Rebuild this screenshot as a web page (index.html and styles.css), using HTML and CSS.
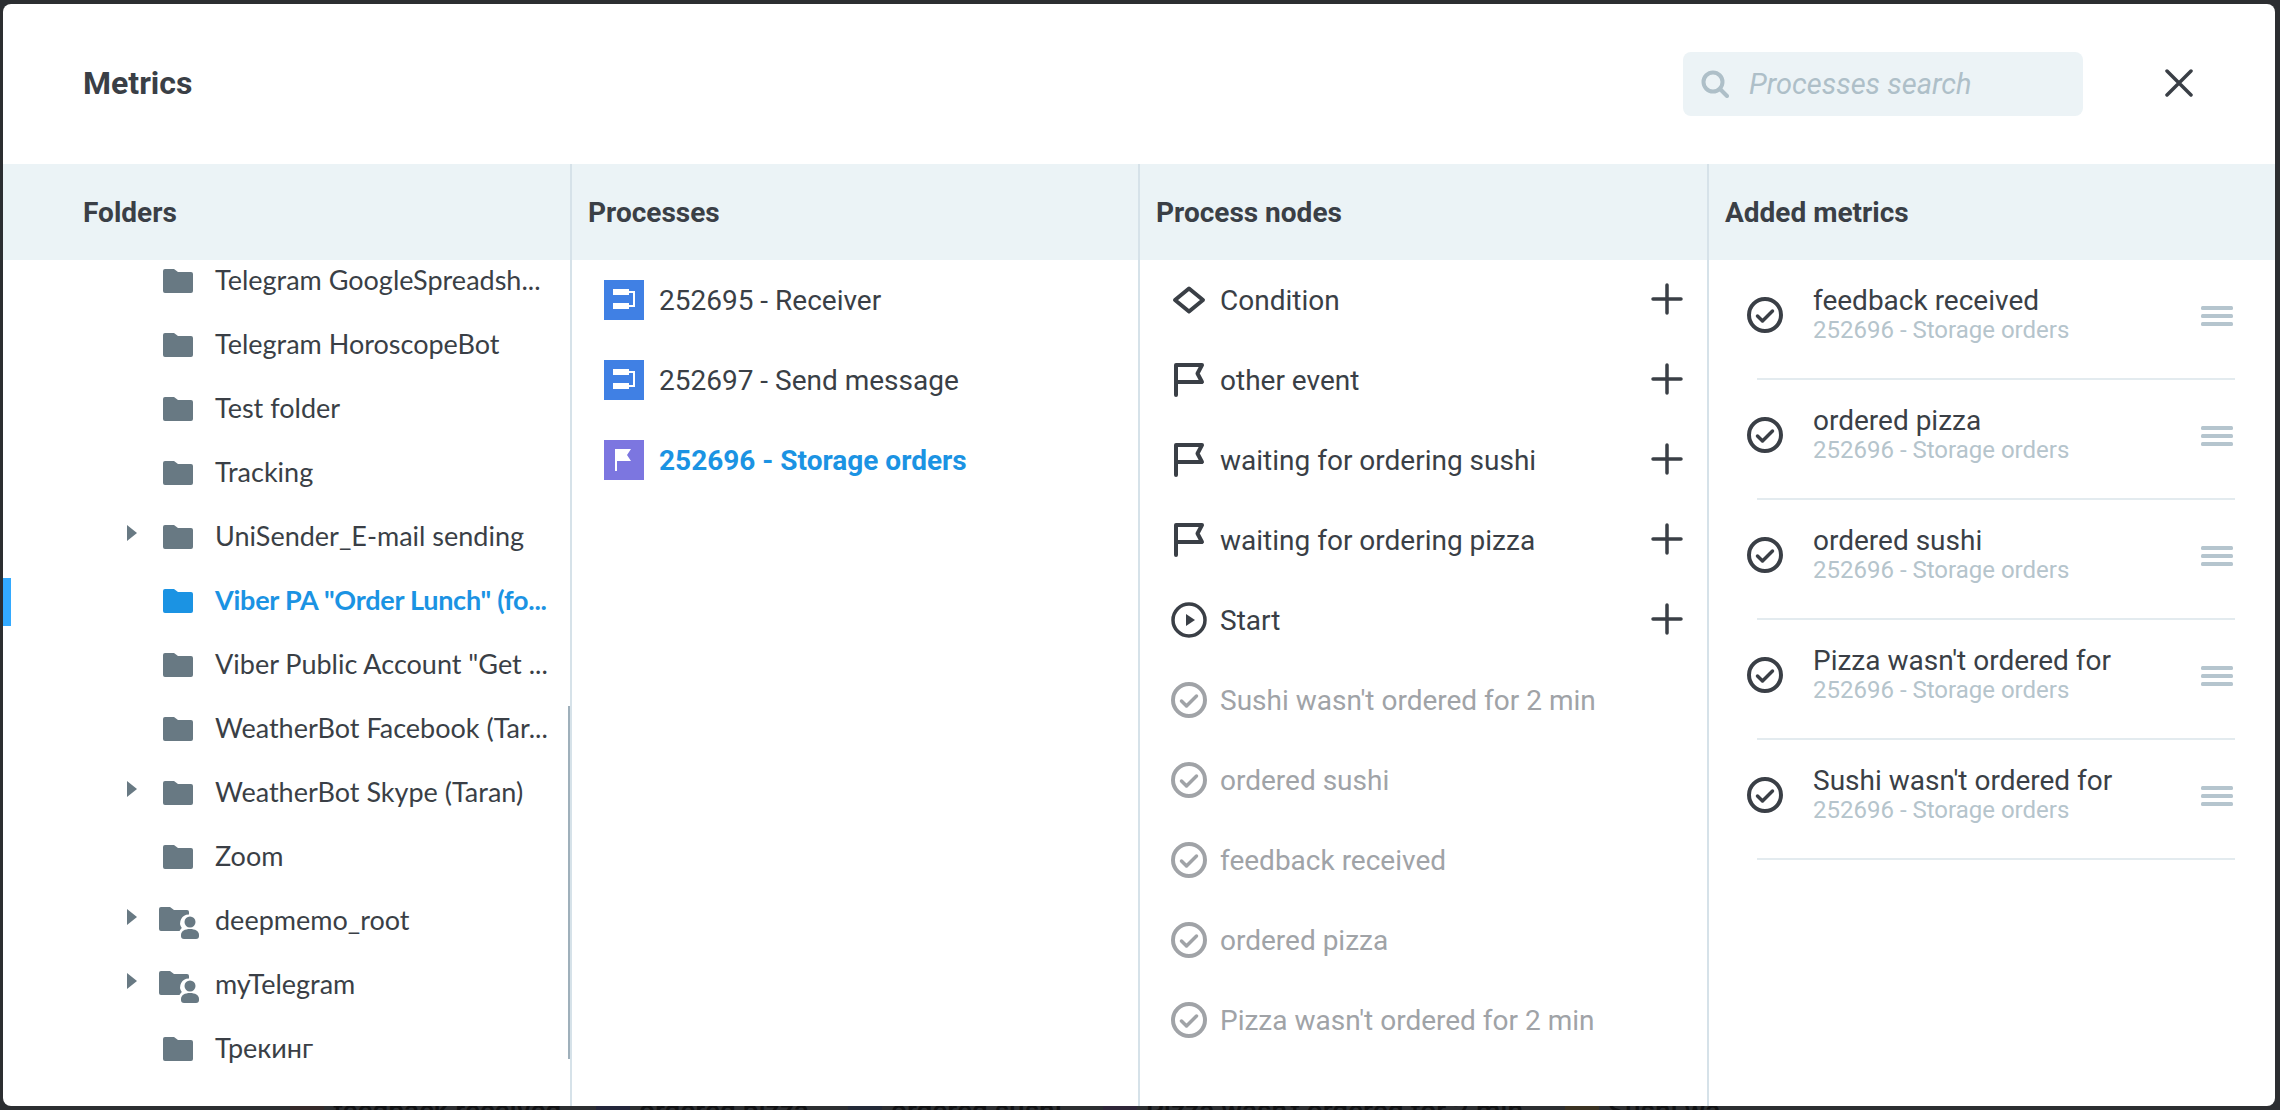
FILE: index.html
```html
<!DOCTYPE html>
<html lang="en">
<head>
    <meta charset="UTF-8">
    <meta name="viewport" content="width=device-width, initial-scale=1.0">
    <title>Metrics</title>
    <link rel="stylesheet" href="styles.css">
</head>
<body>
    <svg class="sprite" aria-hidden="true">
        <symbol id="i-folder" viewBox="0 0 30 24"><path d="M2 0h9l4 3h13a2 2 0 0 1 2 2v17a2 2 0 0 1-2 2H2a2 2 0 0 1-2-2V2a2 2 0 0 1 2-2z"/></symbol>
        <symbol id="i-shared" viewBox="0 0 40 32">
            <path d="M2 0h9l4 3h13a2 2 0 0 1 2 2v2.500a8.500 8.500 0 0 0-7.200 13.500 9 9 0 0 0-2.300 3H2a2 2 0 0 1-2-2V2a2 2 0 0 1 2-2z"/>
            <circle cx="31" cy="15" r="5.500"/>
            <path d="M22 28c0-4 4-6 9-6s9 2 9 6v1a3 3 0 0 1-3 3H25a3 3 0 0 1-3-3z"/>
        </symbol>
        <symbol id="i-process" viewBox="0 0 40 40"><rect x="9" y="9" width="16" height="6" fill="#fff"/><rect x="9" y="23" width="16" height="6" fill="#fff"/><path d="M25 12h5v14h-5" fill="none" stroke="#fff" stroke-width="2"/></symbol>
        <symbol id="i-pflag" viewBox="0 0 40 40"><path d="M11 9h16l-4 6 4 6H13v10h-2z" fill="#fff"/></symbol>
        <symbol id="i-diamond" viewBox="0 0 36 36"><path d="M18 6.500L32 18 18 29.500 4 18z" fill="none" stroke="currentColor" stroke-width="4" stroke-linejoin="round"/></symbol>
        <symbol id="i-flag" viewBox="0 0 36 36"><path d="M5 33V3h26l-4.500 8.500L31 20H5" fill="none" stroke="currentColor" stroke-width="4" stroke-linejoin="round" stroke-linecap="round"/></symbol>
        <symbol id="i-play" viewBox="0 0 36 36"><circle cx="18" cy="18" r="16" fill="none" stroke="currentColor" stroke-width="3.500"/><path d="M15 12l9 6-9 6z" fill="currentColor"/></symbol>
        <symbol id="i-check" viewBox="0 0 36 36"><circle cx="18" cy="18" r="16" fill="none" stroke="currentColor" stroke-width="4"/><path d="M10.500 19l5 5 10-10" fill="none" stroke="currentColor" stroke-width="3.500" stroke-linecap="round" stroke-linejoin="round"/></symbol>
        <symbol id="i-plus" viewBox="0 0 32 32"><path d="M16 2v28M2 16h28" fill="none" stroke="currentColor" stroke-width="3.500" stroke-linecap="round"/></symbol>
        <symbol id="i-drag" viewBox="0 0 32 20"><rect y="0" width="32" height="4" rx="1.500"/><rect y="8" width="32" height="4" rx="1.500"/><rect y="16" width="32" height="4" rx="1.500"/></symbol>
    </svg>

    <!-- what is left of the page under the dialog -->
    <div class="backdrop">
        <span class="back-item back-a">feedback received</span>
        <span class="back-item back-b">ordered pizza</span>
        <span class="back-item back-c">ordered sushi</span>
        <span class="back-item back-d">Pizza wasn't ordered for 2 min</span>
        <span class="back-item back-e">Sushi wa</span>
    </div>

    <div class="modal">
        <div class="modal-head">
            <h1 class="modal-title">Metrics</h1>
            <label class="search">
                <svg class="search-icon" viewBox="0 0 28 28"><circle cx="12" cy="12" r="9.500" fill="none" stroke="currentColor" stroke-width="4"/><path d="M19 19l7 7" fill="none" stroke="currentColor" stroke-width="4" stroke-linecap="round"/></svg>
                <input class="search-input" type="text" placeholder="Processes search">
            </label>
            <svg class="close" viewBox="0 0 28 28"><path d="M2 2l24 24M26 2L2 26" fill="none" stroke="currentColor" stroke-width="3.500" stroke-linecap="round"/></svg>
        </div>

        <div class="columns">
            <section class="col col-folders">
                <h2 class="col-head">Folders</h2>
                <ul class="folder-list">
                    <li class="folder"><span class="arrow-slot"></span><svg class="folder-icon"><use href="#i-folder"/></svg><span class="folder-name">Telegram GoogleSpreadsh...</span></li>
                    <li class="folder"><span class="arrow-slot"></span><svg class="folder-icon"><use href="#i-folder"/></svg><span class="folder-name">Telegram HoroscopeBot</span></li>
                    <li class="folder"><span class="arrow-slot"></span><svg class="folder-icon"><use href="#i-folder"/></svg><span class="folder-name">Test folder</span></li>
                    <li class="folder"><span class="arrow-slot"></span><svg class="folder-icon"><use href="#i-folder"/></svg><span class="folder-name">Tracking</span></li>
                    <li class="folder"><span class="arrow-slot"><i class="arrow"></i></span><svg class="folder-icon"><use href="#i-folder"/></svg><span class="folder-name">UniSender_E-mail sending</span></li>
                    <li class="folder active"><span class="arrow-slot"></span><svg class="folder-icon"><use href="#i-folder"/></svg><span class="folder-name">Viber PA "Order Lunch" (fo...</span></li>
                    <li class="folder"><span class="arrow-slot"></span><svg class="folder-icon"><use href="#i-folder"/></svg><span class="folder-name">Viber Public Account "Get ...</span></li>
                    <li class="folder"><span class="arrow-slot"></span><svg class="folder-icon"><use href="#i-folder"/></svg><span class="folder-name">WeatherBot Facebook (Tar...</span></li>
                    <li class="folder"><span class="arrow-slot"><i class="arrow"></i></span><svg class="folder-icon"><use href="#i-folder"/></svg><span class="folder-name">WeatherBot Skype (Taran)</span></li>
                    <li class="folder"><span class="arrow-slot"></span><svg class="folder-icon"><use href="#i-folder"/></svg><span class="folder-name">Zoom</span></li>
                    <li class="folder"><span class="arrow-slot"><i class="arrow"></i></span><svg class="folder-icon shared"><use href="#i-shared"/></svg><span class="folder-name">deepmemo_root</span></li>
                    <li class="folder"><span class="arrow-slot"><i class="arrow"></i></span><svg class="folder-icon shared"><use href="#i-shared"/></svg><span class="folder-name">myTelegram</span></li>
                    <li class="folder"><span class="arrow-slot"></span><svg class="folder-icon"><use href="#i-folder"/></svg><span class="folder-name">Трекинг</span></li>
                </ul>
                <div class="scrollbar"></div>
            </section>

            <section class="col">
                <h2 class="col-head">Processes</h2>
                <ul class="list">
                    <li class="process"><svg class="process-icon conv"><use href="#i-process"/></svg>252695 - Receiver</li>
                    <li class="process"><svg class="process-icon conv"><use href="#i-process"/></svg>252697 - Send message</li>
                    <li class="process selected"><svg class="process-icon state"><use href="#i-pflag"/></svg>252696 - Storage orders</li>
                </ul>
            </section>

            <section class="col">
                <h2 class="col-head">Process nodes</h2>
                <ul class="list">
                    <li class="node"><svg class="node-icon"><use href="#i-diamond"/></svg><span class="node-name">Condition</span><svg class="plus"><use href="#i-plus"/></svg></li>
                    <li class="node"><svg class="node-icon"><use href="#i-flag"/></svg><span class="node-name">other event</span><svg class="plus"><use href="#i-plus"/></svg></li>
                    <li class="node"><svg class="node-icon"><use href="#i-flag"/></svg><span class="node-name">waiting for ordering sushi</span><svg class="plus"><use href="#i-plus"/></svg></li>
                    <li class="node"><svg class="node-icon"><use href="#i-flag"/></svg><span class="node-name">waiting for ordering pizza</span><svg class="plus"><use href="#i-plus"/></svg></li>
                    <li class="node"><svg class="node-icon"><use href="#i-play"/></svg><span class="node-name">Start</span><svg class="plus"><use href="#i-plus"/></svg></li>
                    <li class="node added"><svg class="node-icon"><use href="#i-check"/></svg><span class="node-name">Sushi wasn't ordered for 2 min</span></li>
                    <li class="node added"><svg class="node-icon"><use href="#i-check"/></svg><span class="node-name">ordered sushi</span></li>
                    <li class="node added"><svg class="node-icon"><use href="#i-check"/></svg><span class="node-name">feedback received</span></li>
                    <li class="node added"><svg class="node-icon"><use href="#i-check"/></svg><span class="node-name">ordered pizza</span></li>
                    <li class="node added"><svg class="node-icon"><use href="#i-check"/></svg><span class="node-name">Pizza wasn't ordered for 2 min</span></li>
                </ul>
            </section>

            <section class="col">
                <h2 class="col-head">Added metrics</h2>
                <ul class="list">
                    <li class="metric"><svg class="metric-icon"><use href="#i-check"/></svg><div class="metric-text"><div class="metric-name">feedback received</div><div class="metric-sub">252696 - Storage orders</div></div><svg class="drag"><use href="#i-drag"/></svg></li>
                    <li class="metric"><svg class="metric-icon"><use href="#i-check"/></svg><div class="metric-text"><div class="metric-name">ordered pizza</div><div class="metric-sub">252696 - Storage orders</div></div><svg class="drag"><use href="#i-drag"/></svg></li>
                    <li class="metric"><svg class="metric-icon"><use href="#i-check"/></svg><div class="metric-text"><div class="metric-name">ordered sushi</div><div class="metric-sub">252696 - Storage orders</div></div><svg class="drag"><use href="#i-drag"/></svg></li>
                    <li class="metric"><svg class="metric-icon"><use href="#i-check"/></svg><div class="metric-text"><div class="metric-name">Pizza wasn't ordered for</div><div class="metric-sub">252696 - Storage orders</div></div><svg class="drag"><use href="#i-drag"/></svg></li>
                    <li class="metric"><svg class="metric-icon"><use href="#i-check"/></svg><div class="metric-text"><div class="metric-name">Sushi wasn't ordered for</div><div class="metric-sub">252696 - Storage orders</div></div><svg class="drag"><use href="#i-drag"/></svg></li>
                </ul>
            </section>
        </div>
    </div>
</body>
</html>
```

FILE: styles.css
```css
* {
    box-sizing: border-box;
}
html, body {
    height: 100%;
}
body {
    margin: 0;
    padding: 4px 5px 4px 3px;
    overflow: hidden;
    position: relative;
    background-color: #2c2e31;
    font-family: Roboto, Arial, sans-serif;
    color: #3a3f46;
}
ul {
    list-style: none;
    margin: 0;
    padding: 0;
}
.sprite {
    display: none;
}

/* page behind the dialog, only its top edge shows */
.backdrop {
    position: absolute;
    left: 0;
    right: 0;
    top: 1097px;
    font-size: 28px;
    line-height: 28px;
    font-weight: 500;
    color: #101113;
}
.back-item {
    position: absolute;
    top: 0;
    white-space: nowrap;
}
.back-item::before {
    content: "";
    position: absolute;
    left: -43px;
    top: 0;
    width: 34px;
    height: 20px;
}
.back-a { left: 333px; }
.back-b { left: 639px; }
.back-c { left: 891px; }
.back-d { left: 1146px; }
.back-e { left: 1608px; }
.back-a::before { background-color: #352a2a; }
.back-b::before { background-color: #23263a; }
.back-c::before { background-color: #232a38; }
.back-d::before { background-color: #2e2638; }
.back-e::before { background-color: #3a3222; }

.modal {
    position: relative;
    height: 100%;
    display: flex;
    flex-direction: column;
    background-color: #fff;
    border-radius: 8px;
    overflow: hidden;
}
.modal-head {
    height: 160px;
    flex-shrink: 0;
    display: flex;
    align-items: center;
    padding: 0 82px 0 80px;
}
.modal-title {
    margin: -2px auto 0 0;
    font-size: 32px;
    font-weight: 700;
}
.search {
    width: 400px;
    height: 64px;
    display: flex;
    align-items: center;
    gap: 20px;
    padding-left: 18px;
    background-color: #ecf3f6;
    border-radius: 8px;
    color: #aebfc8;
}
.search-icon {
    width: 28px;
    height: 28px;
    flex-shrink: 0;
}
.search-input {
    flex: 1;
    min-width: 0;
    border: none;
    outline: none;
    padding: 0;
    background: transparent;
    font-family: inherit;
    font-size: 29px;
    font-style: italic;
}
.search-input::placeholder {
    color: #aebfc8;
    opacity: 1;
}
.close {
    width: 28px;
    height: 28px;
    margin-left: 82px;
    margin-top: -2px;
}

.columns {
    flex: 1;
    min-height: 0;
    display: grid;
    grid-template-columns: 567px 568px 569px 1fr;
}
.col {
    position: relative;
    min-width: 0;
    overflow: hidden;
    border-left: 2px solid #d6e2e9;
}
.col-folders {
    border-left: none;
}
.col-head {
    height: 96px;
    margin: 0;
    padding-left: 16px;
    display: flex;
    align-items: center;
    background-color: #ebf3f6;
    font-size: 28px;
    font-weight: 700;
}
.col-folders .col-head {
    padding-left: 80px;
}

.folder-list {
    margin-top: -11px;
}
.folder {
    position: relative;
    height: 64px;
    display: flex;
    align-items: center;
    padding-left: 120px;
    font-family: Lato, "Noto Sans", Arial, sans-serif;
    font-size: 27px;
    white-space: nowrap;
}
.folder-name {
    margin-top: -3px;
}
.arrow-slot {
    width: 40px;
    flex-shrink: 0;
    display: flex;
    padding-left: 4px;
}
.arrow {
    width: 0;
    height: 0;
    margin-top: -8px;
    border-left: 10px solid #687983;
    border-top: 8px solid transparent;
    border-bottom: 8px solid transparent;
}
.folder-icon {
    width: 30px;
    height: 24px;
    flex-shrink: 0;
    margin-right: 22px;
    fill: #687983;
}
.folder-icon.shared {
    width: 40px;
    height: 32px;
    margin: 4px 16px 0 -4px;
}
.folder.active {
    color: #1b93e3;
    font-weight: 700;
    letter-spacing: -0.25px;
}
.folder.active .folder-icon {
    fill: #1b93e3;
}
.folder.active::before {
    content: "";
    position: absolute;
    left: 0;
    top: 9px;
    width: 8px;
    height: 48px;
    background-color: #33aaff;
}
.scrollbar {
    position: absolute;
    right: 0;
    top: 542px;
    width: 2px;
    height: 353px;
    background-color: #9fb0bb;
}

.process {
    height: 80px;
    display: flex;
    align-items: center;
    gap: 15px;
    padding-left: 32px;
    font-size: 28px;
}
.process-icon {
    width: 40px;
    height: 40px;
    flex-shrink: 0;
}
.conv {
    background-color: #4080e4;
}
.state {
    background-color: #7c76e0;
}
.process.selected {
    color: #1b93e3;
    font-weight: 700;
}

.node {
    height: 80px;
    display: flex;
    align-items: center;
    padding: 0 24px 0 31px;
    font-size: 28px;
}
.node-icon {
    width: 36px;
    height: 36px;
    flex-shrink: 0;
    margin-right: 13px;
}
.node-name {
    flex: 1;
}
.plus {
    width: 32px;
    height: 32px;
    margin-top: -2px;
}
.node.added {
    color: #a0a3a7;
}

.metric {
    position: relative;
    height: 120px;
    margin: 0 40px 0 48px;
    padding-bottom: 10px;
    display: flex;
    align-items: center;
    border-bottom: 2px solid #e3ebef;
}
.metric-icon {
    width: 36px;
    height: 36px;
    flex-shrink: 0;
    margin: 2px 30px 0 -10px;
}
.metric-text {
    flex: 1;
    min-width: 0;
}
.metric-name {
    font-size: 28px;
    line-height: 32px;
}
.metric-sub {
    font-size: 24px;
    line-height: 26px;
    color: #b5c4cc;
}
.drag {
    width: 32px;
    height: 20px;
    margin-right: 2px;
    margin-top: 4px;
    fill: #b5c5ce;
}
```
